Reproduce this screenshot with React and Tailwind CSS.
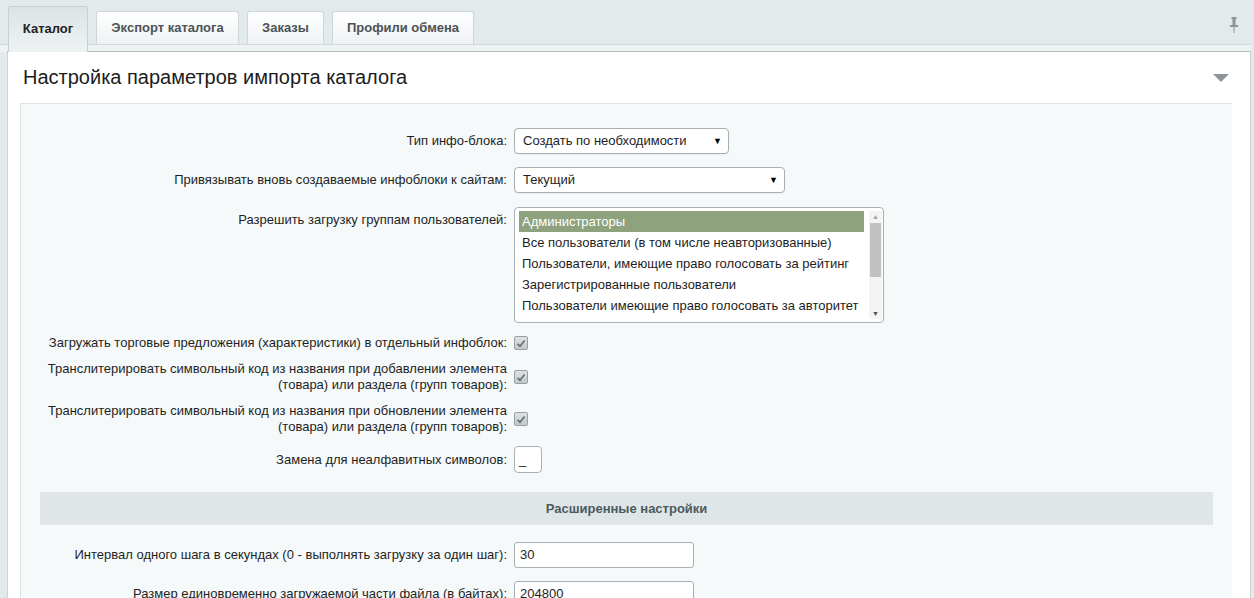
import React from "react";

const font = { fontFamily: '"Liberation Sans", Arial, sans-serif' };

function Check() {
  return (
    <span className="inline-flex h-[14px] w-[14px] items-center justify-center rounded-[2px] border border-[#9aa0a2] bg-gradient-to-b from-[#dfe3e4] to-[#c2c8ca]">
      <svg width="10" height="9" viewBox="0 0 10 9">
        <path d="M1.5 4.8 L4 7.2 L8.6 1.6" fill="none" stroke="#656d70" strokeWidth="1.6" />
      </svg>
    </span>
  );
}

function Select({ width, value }) {
  return (
    <div
      className="flex h-[26px] items-center justify-between rounded-[4px] border border-[#a8b0b3] bg-white pl-[8px] pr-[6px] text-[13px] text-[#1e1e1e] shadow-[0_1px_1px_rgba(0,0,0,0.05)]"
      style={{ width }}
    >
      <span>{value}</span>
      <span className="text-[9px] leading-none text-black">▼</span>
    </div>
  );
}

function Row({ label, children, className = "", labelClass = "" }) {
  return (
    <div className={"grid grid-cols-[493px_1fr] " + className}>
      <div className={"pr-[7px] text-right text-[13px] leading-[16px] text-[#1f1f1f] " + labelClass}>{label}</div>
      <div className="flex items-center">{children}</div>
    </div>
  );
}

const groups = [
  "Администраторы",
  "Все пользователи (в том числе неавторизованные)",
  "Пользователи, имеющие право голосовать за рейтинг",
  "Зарегистрированные пользователи",
  "Пользователи имеющие право голосовать за авторитет",
];

export default function App() {
  return (
    <div className="h-[598px] w-[1254px] overflow-hidden bg-[#e3eaec]" style={font}>
      {/* Tabs */}
      <div className="relative h-[52px]">
        <div className="absolute left-0 right-[3px] top-[44px] h-[8px] border-t border-[#d3dadc] bg-[#eef2f3]" />
        <div className="absolute left-[7px] right-[3px] top-[51px] h-px bg-[#b3bbbe]" />
        <div className="relative flex items-end gap-[8px] pl-[8px] pt-[6px]">
          <div className="flex h-[46px] w-[80px] items-start justify-center rounded-t-[3px] border border-b-0 border-[#c9d0d3] bg-gradient-to-b from-[#dde4e6] to-[#eef2f3] pt-[12px] text-[13px] font-bold text-[#222]">
            Каталог
          </div>
          <div className="mb-[8px] flex h-[33px] w-[143px] items-center justify-center rounded-t-[3px] border border-b-0 border-[#cfd6d8] bg-gradient-to-b from-[#ffffff] to-[#eef2f3] text-[13px] font-bold text-[#4c5356]">
            Экспорт каталога
          </div>
          <div className="mb-[8px] flex h-[33px] w-[77px] items-center justify-center rounded-t-[3px] border border-b-0 border-[#cfd6d8] bg-gradient-to-b from-[#ffffff] to-[#eef2f3] text-[13px] font-bold text-[#4c5356]">
            Заказы
          </div>
          <div className="mb-[8px] flex h-[33px] w-[142px] items-center justify-center rounded-t-[3px] border border-b-0 border-[#cfd6d8] bg-gradient-to-b from-[#ffffff] to-[#eef2f3] text-[13px] font-bold text-[#4c5356]">
            Профили обмена
          </div>
        </div>
        <svg className="absolute left-[1229px] top-[16px]" width="10" height="18" viewBox="0 0 10 18">
          <rect x="2.5" y="1" width="5" height="2" fill="#8b9396" />
          <rect x="3.5" y="3" width="3" height="6" fill="#8b9396" />
          <rect x="1" y="9" width="8" height="2" fill="#8b9396" />
          <rect x="4.5" y="11" width="1" height="6" fill="#8b9396" />
        </svg>
      </div>

      {/* Panel */}
      <div className="ml-[7px] mr-[3px] border-x border-[#cdd4d6] bg-white">
        <div className="flex h-[51px] items-center justify-between pl-[15px] pr-[21px]">
          <h1 className="pb-[2px] text-[20px] font-normal text-[#1c1c1c]">Настройка параметров импорта каталога</h1>
          <svg width="16" height="8" viewBox="0 0 16 8">
            <path d="M0 0 H16 L8 8 Z" fill="#8e9497" />
          </svg>
        </div>

        <div className="ml-[12px] mr-[18px] border-l border-t border-[#dde3e5] bg-[#f5f9f9] pb-[40px] pt-[24px]">
          <Row label="Тип инфо-блока:" labelClass="self-center">
            <Select width={215} value="Создать по необходимости" />
          </Row>
          <Row label="Привязывать вновь создаваемые инфоблоки к сайтам:" className="mt-[13px]" labelClass="self-center">
            <Select width={271} value="Текущий" />
          </Row>
          <Row label="Разрешить загрузку группам пользователей:" className="mt-[14px]" labelClass="pt-[5px]">
            <div className="flex h-[116px] w-[370px] rounded-[4px] border border-[#a8b0b3] bg-white py-[3px] pl-[4px] pr-[1px]">
              <div className="flex-1">
                {groups.map((g, i) => (
                  <div
                    key={g}
                    className={
                      "h-[21px] pl-[3px] text-[13px] leading-[21px] " +
                      (i === 0 ? "bg-[#8ea27d] text-white" : "text-[#1e1e1e]")
                    }
                  >
                    {g}
                  </div>
                ))}
              </div>
              <div className="ml-[5px] flex w-[13px] flex-col items-center bg-[#f4f4f4]">
                <span className="mt-[2px] text-[7px] leading-[8px] text-[#a3a3a3]">▲</span>
                <div className="mt-[2px] h-[54px] w-[11px] bg-[#c1c1c1]" />
                <div className="flex-1" />
                <span className="mb-[1px] text-[7px] leading-[8px] text-[#505050]">▼</span>
              </div>
            </div>
          </Row>
          <Row label="Загружать торговые предложения (характеристики) в отдельный инфоблок:" className="mt-[12px] items-center">
            <Check />
          </Row>
          <Row
            label={<>Транслитерировать символьный код из названия при добавлении элемента<br />(товара) или раздела (групп товаров):</>}
            className="mt-[10px] items-center"
          >
            <Check />
          </Row>
          <Row
            label={<>Транслитерировать символьный код из названия при обновлении элемента<br />(товара) или раздела (групп товаров):</>}
            className="mt-[10px] items-center"
          >
            <Check />
          </Row>
          <Row label="Замена для неалфавитных символов:" className="mt-[11px] items-center">
            <div className="flex h-[27px] w-[28px] items-center rounded-[4px] border border-[#a8b0b3] bg-white pl-[4px] text-[13px] text-[#1e1e1e]">
              _
            </div>
          </Row>

          <div className="ml-[19px] mr-[19px] mt-[19px] flex h-[33px] items-center justify-center bg-[#e0e6e8] text-[13px] font-bold text-[#4b5a5e]">
            Расширенные настройки
          </div>

          <Row label="Интервал одного шага в секундах (0 - выполнять загрузку за один шаг):" className="mt-[17px] items-center">
            <div className="flex h-[26px] w-[180px] items-center rounded-[3px] border border-[#a8b0b3] bg-white pl-[5px] text-[13px] text-[#1e1e1e]">
              30
            </div>
          </Row>
          <Row label="Размер единовременно загружаемой части файла (в байтах):" className="mt-[13px] items-center">
            <div className="flex h-[26px] w-[180px] items-center rounded-[3px] border border-[#a8b0b3] bg-white pl-[5px] text-[13px] text-[#1e1e1e]">
              204800
            </div>
          </Row>
        </div>
      </div>
    </div>
  );
}
